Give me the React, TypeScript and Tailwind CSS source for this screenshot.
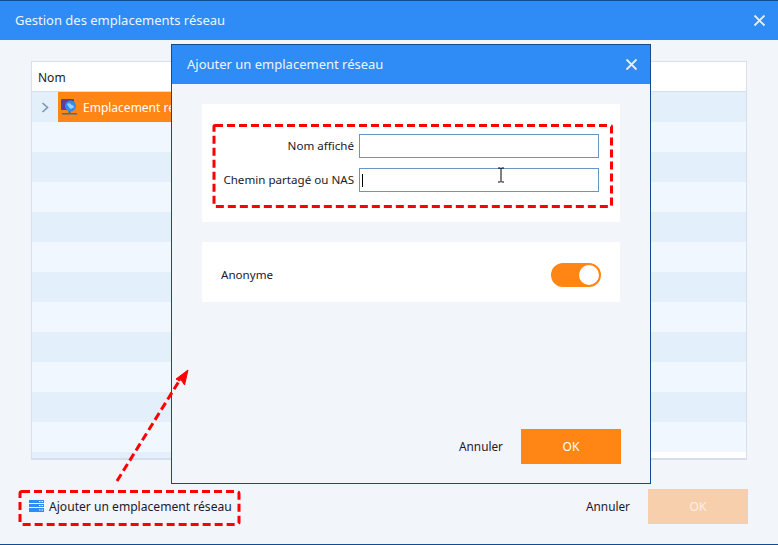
const ROW_COUNT = 12;

function CloseIcon() {
  return (
    <svg width="13" height="13" viewBox="0 0 13 13" className="block">
      <path d="M1.500 1.500 11.500 11.500M11.500 1.500 1.500 11.500" stroke="#e3eefc" strokeWidth="1.800" fill="none" />
    </svg>
  );
}

function NetworkIcon() {
  return (
    <svg width="18" height="18" viewBox="0 0 18 18" className="block">
      <rect x="1" y="1" width="13" height="11" rx="1" fill="#5b3f9e" />
      <rect x="2" y="15" width="15" height="1.500" fill="#4a6a90" />
      <rect x="8.500" y="12" width="2" height="3" fill="#4a6a90" />
      <circle cx="10.500" cy="8" r="5.500" fill="#2f8cf2" />
      <path d="M7 6.500c2-2 3-1 4 0s3 1 3 2-3 3-4 2-1-2-3-4z" fill="#9fd0fb" />
    </svg>
  );
}

function ServerIcon() {
  return (
    <svg width="15" height="12" viewBox="0 0 15 12" className="block">
      <rect x="0" y="0" width="15" height="3" fill="#2f8bf5" />
      <rect x="0" y="4" width="15" height="3" fill="#2f8bf5" />
      <rect x="0" y="8" width="15" height="4" fill="#2f8bf5" />
      <path d="M10 1.500h1.500M12.500 1.500h1.500M10 5.500h1.500M12.500 5.500h1.500M10 10h1.500M12.500 10h1.500" stroke="#fff" strokeWidth="1" />
    </svg>
  );
}

function TitleBar({ title }: { title: string }) {
  return (
    <div className="flex h-[39px] shrink-0 items-center justify-between bg-[#2f8bf5] pl-[15px] pr-[12px] text-[13px] text-[#eef5fe]">
      <span>{title}</span>
      <CloseIcon />
    </div>
  );
}

function Field({ label, caret }: { label: string; caret?: boolean }) {
  return (
    <div className="flex items-center justify-end gap-[5px]">
      <span className="text-[11.600px] text-[#1a1a2a]">{label}</span>
      <div className="flex h-[24px] w-[240px] items-center border border-[#6a94c4] bg-white pl-[2px]">
        {caret && <div className="h-[13px] w-px bg-black" />}
      </div>
    </div>
  );
}

// Red annotations drawn over the screenshot
function Annotations() {
  return (
    <svg width="778" height="545" className="pointer-events-none absolute left-0 top-0">
      <g fill="none" stroke="#ff0000" strokeWidth="3" strokeDasharray="8 4">
        <rect x="214" y="125.500" width="397.500" height="81" rx="1" />
        <rect x="20" y="491.500" width="219" height="33" rx="2" />
        <path d="M117 481 181 378" />
      </g>
      <path d="M188 370 176 379 179.500 381 181 379.500 184.500 385z" fill="#ff0000" stroke="#ff0000" strokeWidth="1" />
    </svg>
  );
}

export default function App() {
  return (
    <div className="relative h-[545px] w-[778px] overflow-hidden bg-[#f2f5fa] font-['Noto_Sans','Open_Sans',sans-serif] text-[12px] text-[#1a1a2a]">
      <div className="flex h-full flex-col border-y border-[#0f4c92]">
        <TitleBar title="Gestion des emplacements réseau" />

        <div className="flex flex-1 flex-col px-[31px] pt-[21px]">
          <div className="flex h-[399px] flex-col overflow-hidden border border-b-2 border-[#d6e0ec] bg-white">
            <div className="flex h-[29px] shrink-0 items-center bg-white pl-[6px] pt-[2px]">Nom</div>
            <div className="h-px shrink-0 bg-[#d6e0ec]" />
            {Array.from({ length: ROW_COUNT }, (_, i) =>
              i === 0 ? (
                <div key={i} className="flex h-[30px] shrink-0 bg-[#e3effb]">
                  <div className="flex w-[26px] items-center justify-center">
                    <svg width="8" height="11" viewBox="0 0 8 11" className="block">
                      <path d="M1.500 1 6.500 5.500 1.500 10" stroke="#7f93ad" strokeWidth="1.600" fill="none" />
                    </svg>
                  </div>
                  <div className="flex w-[200px] items-center gap-[5px] bg-[#ff8515] pl-[2px] text-white">
                    <NetworkIcon />
                    <span className="pt-[2px]">Emplacement réseau</span>
                  </div>
                </div>
              ) : (
                <div key={i} className={`h-[30px] shrink-0 ${i % 2 === 0 ? 'bg-[#e3effb]' : 'bg-[#f0f7fe]'}`} />
              ),
            )}
            <div className="flex flex-1">
              <div className="w-1/2 bg-[#e3effb]" />
            </div>
          </div>
        </div>

        <div className="mb-[20px] flex h-[35px] shrink-0 items-center justify-between pl-[29px] pr-[30px]">
          <button type="button" className="flex items-center gap-[5px] text-[12.100px]">
            <ServerIcon />
            <span className="pt-[2px]">Ajouter un emplacement réseau</span>
          </button>
          <div className="flex items-center gap-[18px]">
            <button type="button" className="text-[11.800px]">Annuler</button>
            <button type="button" className="h-[35px] w-[100px] bg-[#f7cfad] text-[#fdf0e4]">OK</button>
          </div>
        </div>
      </div>

      {/* Add dialog */}
      <div className="absolute left-[171px] top-[44px] flex h-[440px] w-[480px] flex-col border border-[#0f4c92] bg-[#f2f5fa]">
        <TitleBar title="Ajouter un emplacement réseau" />
        <div className="flex flex-1 flex-col px-[30px] pt-[20px]">
          <div className="flex h-[118px] flex-col gap-[10px] bg-white pr-[21px] pt-[30px]">
            <Field label="Nom affiché" />
            <Field label="Chemin partagé ou NAS" caret />
          </div>
          <div className="mt-[20px] flex h-[60px] items-center justify-between bg-white px-[19px] pt-[6px]">
            <span className="text-[11.600px]">Anonyme</span>
            <div className="flex h-[24px] w-[50px] items-center justify-end rounded-full bg-[#ff8515] pr-[2px]">
              <div className="h-[20px] w-[20px] rounded-full bg-white" />
            </div>
          </div>
          <div className="mb-[19px] mr-[-1px] mt-auto flex items-center justify-end gap-[18px]">
            <button type="button" className="text-[11.800px]">Annuler</button>
            <button type="button" className="h-[35px] w-[100px] bg-[#ff8515] text-white">OK</button>
          </div>
        </div>
        <svg width="14" height="16" viewBox="0 0 14 16" className="absolute left-[322px] top-[122px] block">
          <path d="M4 1h2.500M7.500 1H10M7 1v14M4 15h2.500M7.500 15H10" stroke="#000" strokeWidth="1" fill="none" />
        </svg>
      </div>

      <Annotations />
    </div>
  );
}
